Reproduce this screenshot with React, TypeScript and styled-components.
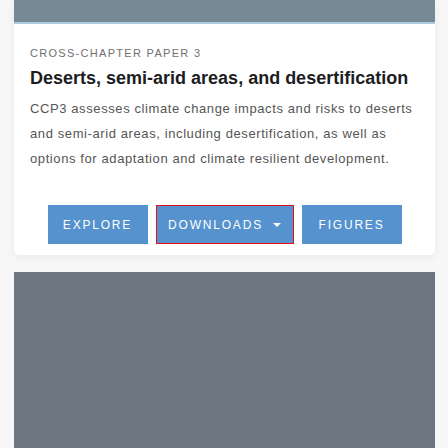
import React from "react";
import styled, { createGlobalStyle } from "styled-components";

const Global = createGlobalStyle`
  html, body { margin: 0; padding: 0; background: #f7f7f7; }
  body { font-family: "Liberation Sans", Arial, sans-serif; }
  * { box-sizing: border-box; }
`;

const Page = styled.div`
  padding: 0 13px 0 14px;
  display: flex;
  flex-direction: column;
  gap: 17px;
  height: 448px;
  overflow: hidden;
`;

const Card = styled.section`
  background: #ffffff;
  border-radius: 0 0 5px 5px;
  box-shadow: 0 2px 8px rgba(0, 0, 0, 0.06);
  overflow: hidden;
`;

const HeaderBar = styled.div`
  height: 24px;
  background: #768a96;
  border-bottom: 2px solid #a9cddf;
`;

const Body = styled.div`
  padding: 22px 16px 11px 16px;
`;

const Label = styled.div`
  font-size: 11px;
  color: #6f6f6f;
  letter-spacing: 1.3px;
  line-height: 14px;
  text-transform: uppercase;
`;

const Title = styled.h2`
  margin: 7px 0 0 0;
  font-size: 18px;
  font-weight: 700;
  color: #1d1d1f;
  line-height: 22px;
`;

const Text = styled.p`
  margin: 7px 0 0 0;
  font-size: 13px;
  letter-spacing: 0.6px;
  line-height: 25px;
  color: #555555;
`;

const Buttons = styled.div`
  display: flex;
  justify-content: center;
  gap: 8px;
  margin-top: 34px;
`;

const Button = styled.button<{ $w: number; $active?: boolean }>`
  width: ${(p) => p.$w}px;
  height: 39px;
  background: #5592ce;
  border: ${(p) => (p.$active ? "1px solid #e0101a" : "none")};
  color: #ffffff;
  font-family: "Liberation Sans", Arial, sans-serif;
  font-size: 12px;
  letter-spacing: 1.8px;
  text-transform: uppercase;
  display: flex;
  align-items: center;
  justify-content: center;
  gap: 10px;
  padding: 0;
`;

const Caret = styled.span`
  width: 0;
  height: 0;
  border-left: 4px solid transparent;
  border-right: 4px solid transparent;
  border-top: 4px solid #ffffff;
`;

const Media = styled.div`
  flex: 1;
  background: #6c7580;
`;

export default function App() {
  return (
    <>
      <Global />
      <Page>
        <Card>
          <HeaderBar />
          <Body>
            <Label>Cross-Chapter Paper 3</Label>
            <Title>Deserts, semi-arid areas, and desertification</Title>
            <Text>
              CCP3 assesses climate change impacts and risks to deserts
              <br />
              and semi-arid areas, including desertification, as well as
              <br />
              options for adaptation and climate resilient development.
            </Text>
            <Buttons>
              <Button $w={100}>Explore</Button>
              <Button $w={138} $active>
                Downloads <Caret />
              </Button>
              <Button $w={100}>Figures</Button>
            </Buttons>
          </Body>
        </Card>
        <Media />
      </Page>
    </>
  );
}
